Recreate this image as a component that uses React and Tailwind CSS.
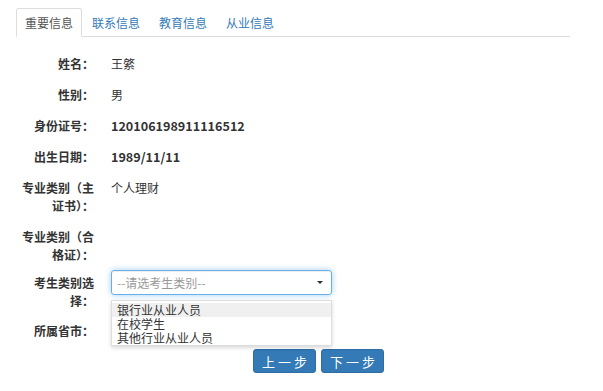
import React from "react";

const F = { fontFamily: '"Noto Sans CJK SC", "Noto Sans", sans-serif' };

function Row({ label, children, bold }) {
  return (
    <div className="flex items-start mb-[13px]">
      <div className="w-[72px] ml-[6px] text-right font-bold text-[12px] leading-[18px] text-[#333]">{label}</div>
      <div className={"ml-[17px] text-[12px] leading-[18px] text-[#333] " + (bold ? "font-bold" : "")}>{children}</div>
    </div>
  );
}

export default function App() {
  const tabs = ["重要信息", "联系信息", "教育信息", "从业信息"];
  return (
    <div className="relative w-[603px] h-[391px] bg-white pt-2 pl-4 pr-[33px]" style={F}>
      <ul className="flex h-[29px] border-b border-[#ddd]">
        {tabs.map((t, i) => (
          <li
            key={t}
            className={
              "h-[29px] mr-[1px] px-[8px] flex items-center text-[12px] rounded-t-[3px] border " +
              (i === 0
                ? "border-[#ddd] border-b-white bg-white text-[#555]"
                : "border-transparent text-[#337ab7]")
            }
          >
            {t}
          </li>
        ))}
      </ul>

      <div className="mt-[18px]">
        <Row label="姓名：">王綮</Row>
        <Row label="性别：">男</Row>
        <Row label="身份证号：" bold>
          <span className="text-[12.6px]">120106198911116512</span>
        </Row>
        <Row label="出生日期：" bold>
          <span className="text-[12.6px]">1989/11/11</span>
        </Row>
        <Row label="专业类别（主证书）：">个人理财</Row>
        <div className="flex items-start mb-[6px]">
          <div className="w-[72px] ml-[6px] text-right font-bold text-[12px] leading-[18px] text-[#333]">专业类别（合格证）：</div>
        </div>
        <div className="flex items-start mb-[12px]">
          <div className="w-[72px] ml-[6px] mt-[4px] text-right font-bold text-[12px] leading-[18px] text-[#333]">考生类别选择：</div>
          <div className="ml-[17px] w-[221px] h-[25px] border border-[#66afe9] rounded-[3px] shadow-[inset_0_1px_1px_rgba(0,0,0,0.075),0_0_6px_rgba(102,175,233,0.6)] flex items-center justify-between pl-[5px] pr-[8px] text-[12px] text-[#999]">
            <span>--请选考生类别--</span>
            <span className="w-0 h-0 border-l-[3px] border-r-[3px] border-t-[3px] border-l-transparent border-r-transparent border-t-[#333]"></span>
          </div>
        </div>
        <Row label="所属省市："></Row>
        <div className="flex gap-[5px] ml-[237px] -mt-[4px]">
          <button className="w-[63px] h-[24px] bg-[#337ab7] border border-[#2e6da4] rounded-[3px] text-white text-[13px] leading-none">上 一 步</button>
          <button className="w-[63px] h-[24px] bg-[#337ab7] border border-[#2e6da4] rounded-[3px] text-white text-[13px] leading-none">下 一 步</button>
        </div>
      </div>

      <div className="absolute left-[111px] top-[300px] w-[221px] h-[46px] bg-white border border-[#ddd] shadow-[0_2px_4px_rgba(0,0,0,0.15)] pt-[2px] text-[12px] text-[#333]">
        <div className="bg-[#f0f0f0] pl-[5px] h-[14px] leading-[14px]">银行业从业人员</div>
        <div className="pl-[5px] h-[14px] leading-[14px]">在校学生</div>
        <div className="pl-[5px] h-[14px] leading-[14px]">其他行业从业人员</div>
      </div>
    </div>
  );
}
